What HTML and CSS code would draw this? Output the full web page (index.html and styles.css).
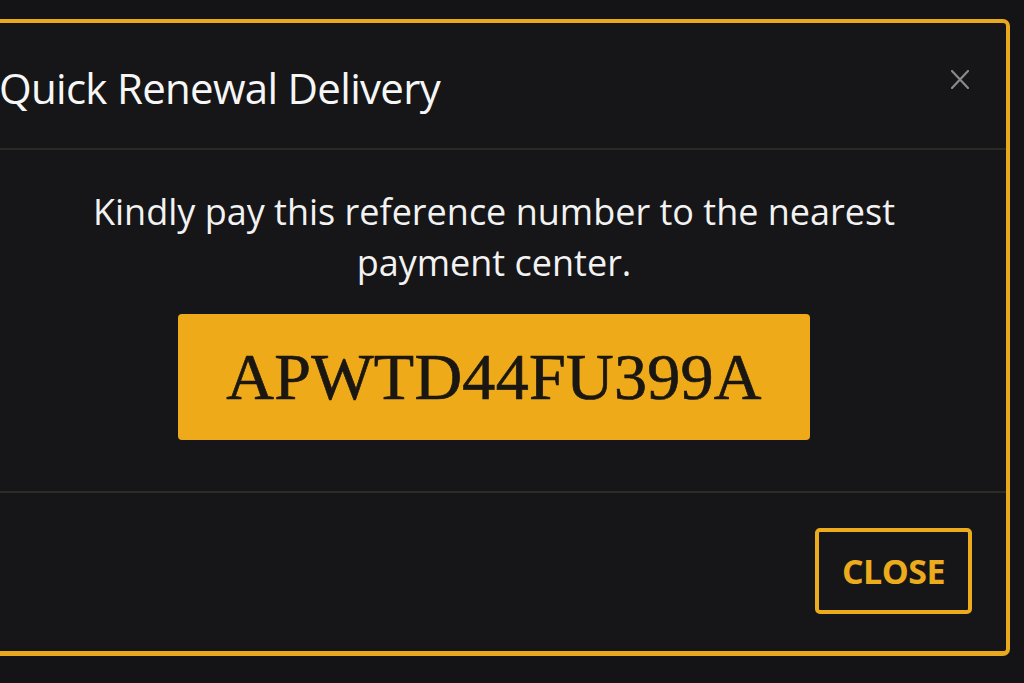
FILE: index.html
```html
<!DOCTYPE html>
<html lang="en">
<head>
<meta charset="utf-8">
<title>Quick Renewal Delivery</title>
<link rel="stylesheet" href="styles.css">
</head>
<body>
<div class="modal">
  <div class="modal-header">
    <h1 class="modal-title">Quick Renewal Delivery</h1>
    <svg class="modal-x" width="18" height="19" viewBox="0 0 18 19" aria-label="close">
      <path d="M1 1 L17 18 M17 1 L1 18" stroke="#8a8a8a" stroke-width="2.2" stroke-linecap="round" fill="none"/>
    </svg>
  </div>
  <div class="modal-body">
    <p class="message">Kindly pay this reference number to the nearest<br>payment center.</p>
    <div class="ref-code">APWTD44FU399A</div>
  </div>
  <div class="modal-footer">
    <button class="close-btn">CLOSE</button>
  </div>
</div>
</body>
</html>
```
FILE: styles.css
```css
html, body {
  margin: 0;
  padding: 0;
  background: #141416;
  height: 683px;
  overflow: hidden;
}
body {
  font-family: "Open Sans", "Noto Sans", sans-serif;
  padding-top: 19px;
}
.modal {
  margin-left: -22px;
  width: 1032px;
  box-sizing: border-box;
  border: 4px solid #e9a91c;
  border-bottom-width: 5px;
  border-radius: 7px;
  background: #161618;
  display: flex;
  flex-direction: column;
}
.modal-header {
  height: 127px;
  box-sizing: border-box;
  display: flex;
  align-items: center;
  justify-content: space-between;
  padding: 0 37px 0 17px;
  border-bottom: 2px solid #2b2a22;
}
.modal-title {
  margin: 0;
  font-weight: 400;
  font-size: 42px;
  color: #f6f6f6;
  letter-spacing: -0.7px;
  padding-top: 4px;
}
.modal-x {
  display: block;
  margin-bottom: 12px;
}
.modal-body {
  height: 343px;
  box-sizing: border-box;
  display: flex;
  flex-direction: column;
  align-items: center;
  padding-top: 36px;
  border-bottom: 2px solid #2e2b27;
}
.message {
  margin: 0;
  text-align: center;
  color: #f2f2f2;
  font-size: 36px;
  line-height: 51px;
}
.ref-code {
  margin-top: 26px;
  width: 632px;
  height: 126px;
  box-sizing: border-box;
  background: #eeaa18;
  border-radius: 4px;
  display: flex;
  align-items: center;
  justify-content: center;
  font-family: "Liberation Serif", "Times New Roman", serif;
  font-size: 66px;
  color: #1a1712;
  -webkit-text-stroke: 0.7px #1a1712;
  letter-spacing: 0.3px;
}
.modal-footer {
  height: 158px;
  box-sizing: border-box;
  display: flex;
  justify-content: flex-end;
  align-items: flex-start;
  padding: 35px 34px 0 0;
}
.close-btn {
  width: 157px;
  height: 86px;
  box-sizing: border-box;
  background: transparent;
  border: 4px solid #ebab1c;
  border-radius: 5px;
  color: #ebab1c;
  font-family: "Open Sans", "Noto Sans", sans-serif;
  font-weight: 700;
  font-size: 34px;
  letter-spacing: -0.5px;
  padding: 0;
}
```
